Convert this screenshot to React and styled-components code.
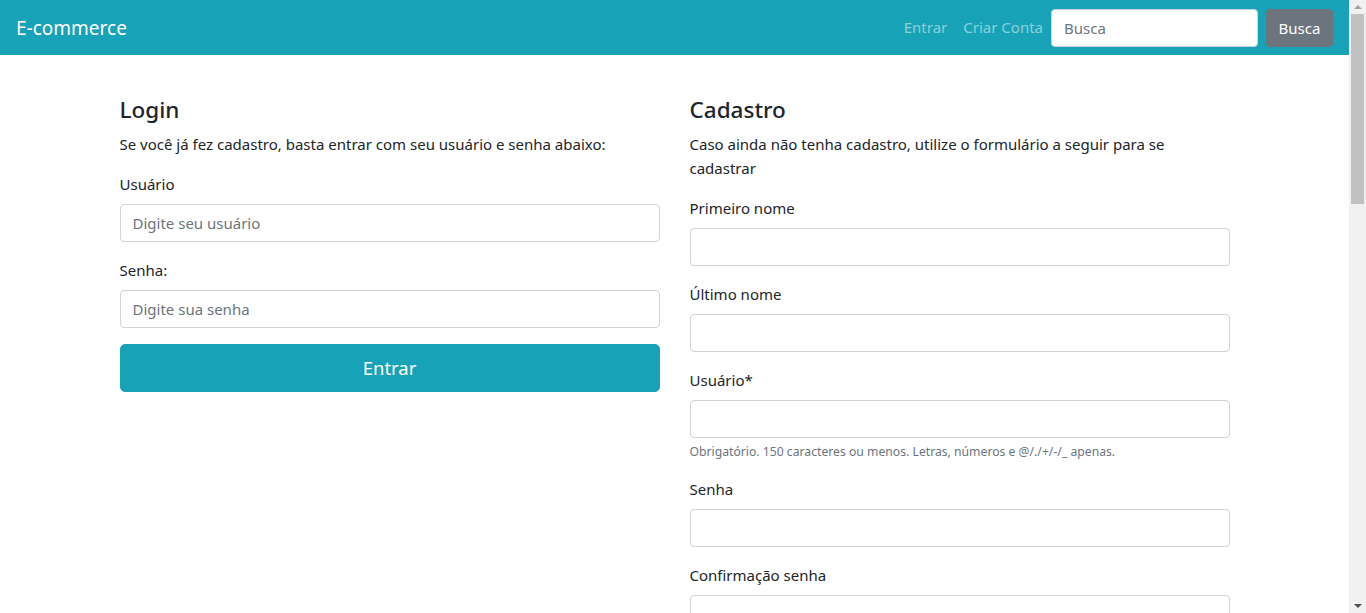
import React from 'react';
import styled, { createGlobalStyle } from 'styled-components';

const GlobalStyle = createGlobalStyle`
  * { box-sizing: border-box; }
  body {
    margin: 0 17px 0 0;
    font-family: "Noto Sans", "Open Sans", sans-serif;
    font-size: 15px;
    line-height: 24px;
    color: #212529;
    background: #fff;
  }
`;

const Navbar = styled.nav`
  display: flex;
  align-items: center;
  justify-content: space-between;
  height: 55px;
  padding: 0 16px;
  background: #17a2b8;
`;

const Brand = styled.a`
  color: #fff;
  font-size: 19px;
  line-height: 30px;
  text-decoration: none;
`;

const NavRight = styled.div`
  display: flex;
  align-items: center;
`;

const NavLink = styled.a`
  color: rgba(255, 255, 255, 0.5);
  padding: 7px 8px 9px;
  text-decoration: none;
`;

const SearchForm = styled.form`
  display: flex;
  align-items: center;
  gap: 8px;
`;

const SearchInput = styled.input`
  width: 207px;
  height: 38px;
  padding: 6px 12px;
  font: inherit;
  color: #495057;
  border: 1px solid #ced4da;
  border-radius: 4px;
  &::placeholder { color: #6c757d; }
`;

const SearchButton = styled.button`
  width: 67px;
  height: 38px;
  padding: 0;
  font: inherit;
  color: #fff;
  background: #6c757d;
  border: 1px solid #6c757d;
  border-radius: 4px;
`;

const Container = styled.div`
  width: 1140px;
  margin: 0 auto;
  padding: 40px 15px 0;
`;

const Row = styled.div`
  display: grid;
  grid-template-columns: 1fr 1fr;
  column-gap: 30px;
`;

const Column = styled.section``;

const Title = styled.h4`
  margin: 0 0 8px;
  font-size: 22.5px;
  font-weight: 500;
  line-height: 29px;
`;

const Lead = styled.p`
  margin: 0 0 16px;
`;

const FormGroup = styled.div`
  margin-bottom: 16px;
`;

const Label = styled.label`
  display: block;
  margin-bottom: 8px;
`;

const Input = styled.input`
  display: block;
  width: 100%;
  height: 38px;
  padding: 6px 12px;
  font: inherit;
  color: #495057;
  border: 1px solid #ced4da;
  border-radius: 4px;
  &::placeholder { color: #6c757d; }
`;

const HelpText = styled.small`
  display: block;
  margin-top: 4px;
  font-size: 12.2px;
  line-height: 19px;
  color: #6c757d;
`;

const SubmitButton = styled.button`
  display: block;
  width: 100%;
  height: 48px;
  font: inherit;
  font-size: 18.5px;
  color: #fff;
  background: #17a2b8;
  border: 1px solid #17a2b8;
  border-radius: 5px;
`;

/* browser scrollbar seen at the right edge of the screenshot */
const Scrollbar = styled.div`
  position: fixed;
  top: 0;
  right: 0;
  width: 17px;
  height: 100vh;
  background: #f1f1f1;
  display: flex;
  flex-direction: column;
  align-items: center;
`;

const Arrow = styled.div`
  width: 0;
  height: 0;
  margin: 5px 0;
  border-left: 4px solid transparent;
  border-right: 4px solid transparent;
  ${(p) => (p.down
    ? 'border-top: 4px solid #505050;'
    : 'border-bottom: 4px solid #a3a3a3;')}
`;

const Thumb = styled.div`
  width: 13px;
  height: 190px;
  background: #c1c1c1;
`;

const Spacer = styled.div`
  flex: 1;
`;

const Field = ({ label, placeholder, type = 'text', help }) => (
  <FormGroup>
    <Label>{label}</Label>
    <Input type={type} placeholder={placeholder} />
    {help && <HelpText>{help}</HelpText>}
  </FormGroup>
);

export default function App() {
  return (
    <>
      <GlobalStyle />
      <Navbar>
        <Brand href="#">E-commerce</Brand>
        <NavRight>
          <NavLink href="#">Entrar</NavLink>
          <NavLink href="#">Criar Conta</NavLink>
          <SearchForm onSubmit={(e) => e.preventDefault()}>
            <SearchInput placeholder="Busca" />
            <SearchButton type="submit">Busca</SearchButton>
          </SearchForm>
        </NavRight>
      </Navbar>

      <Container>
        <Row>
          <Column>
            <Title>Login</Title>
            <Lead>Se você já fez cadastro, basta entrar com seu usuário e senha abaixo:</Lead>
            <Field label="Usuário" placeholder="Digite seu usuário" />
            <Field label="Senha:" placeholder="Digite sua senha" type="password" />
            <SubmitButton type="button">Entrar</SubmitButton>
          </Column>

          <Column>
            <Title>Cadastro</Title>
            <Lead>Caso ainda não tenha cadastro, utilize o formulário a seguir para se cadastrar</Lead>
            <Field label="Primeiro nome" />
            <Field label="Último nome" />
            <Field
              label="Usuário*"
              help="Obrigatório. 150 caracteres ou menos. Letras, números e @/./+/-/_ apenas."
            />
            <Field label="Senha" type="password" />
            <Field label="Confirmação senha" type="password" />
          </Column>
        </Row>
      </Container>

      <Scrollbar>
        <Arrow />
        <Thumb />
        <Spacer />
        <Arrow down />
      </Scrollbar>
    </>
  );
}
